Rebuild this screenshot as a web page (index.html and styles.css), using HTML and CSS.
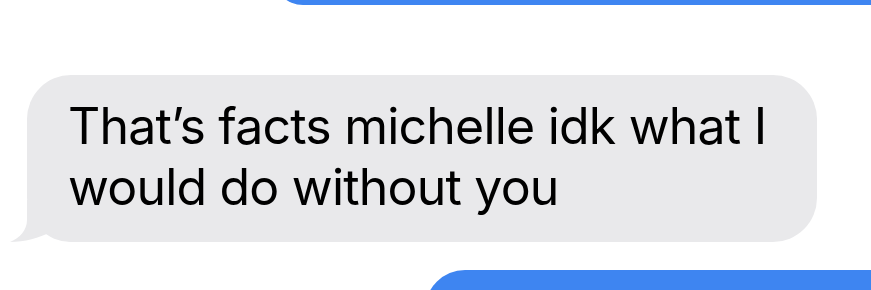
FILE: index.html
```html
<!DOCTYPE html>
<html>
<head>
<meta charset="utf-8">
<link rel="stylesheet" href="styles.css">
</head>
<body>
<div class="thread">
  <div class="bubble sent sent-prev"></div>
  <div class="bubble received">
    <p class="text">That’s facts michelle idk what I would do without you</p>
    <svg class="tail" width="62" height="42" viewBox="0 0 62 42"><path d="M17 0 V20 C17 30 10 38 0 42 C14 42 30 38 40 32 C46 37 54 41 62 42 L62 0 Z" fill="#e9e9eb"/></svg>
  </div>
  <div class="bubble sent sent-next"></div>
</div>
</body>
</html>
```
FILE: styles.css
```css
html, body {
  margin: 0;
  padding: 0;
  background: #ffffff;
  overflow: hidden;
}
.thread {
  display: flex;
  flex-direction: column;
  width: 871px;
  height: 290px;
  overflow: hidden;
}
.bubble {
  flex: none;
}
.sent {
  background: #3e85f1;
  border-radius: 44px;
}
.sent-prev {
  margin-top: -55px;
  margin-left: 273px;
  width: 640px;
  height: 60px;
}
.received {
  position: relative;
  margin-top: 70px;
  margin-left: 27px;
  width: 790px;
  height: 167px;
  box-sizing: border-box;
  padding: 21px 20px 0 41px;
  background: #e9e9eb;
  border-radius: 44px;
}
.text {
  margin: 0;
  font-family: Inter, "Noto Sans", sans-serif;
  font-size: 50px;
  line-height: 61px;
  letter-spacing: -0.8px;
  color: #000000;
}
.tail {
  position: absolute;
  left: -17px;
  bottom: 0;
  display: block;
}
.sent-next {
  margin-top: 28px;
  margin-left: 425px;
  width: 600px;
  height: 80px;
}
```
